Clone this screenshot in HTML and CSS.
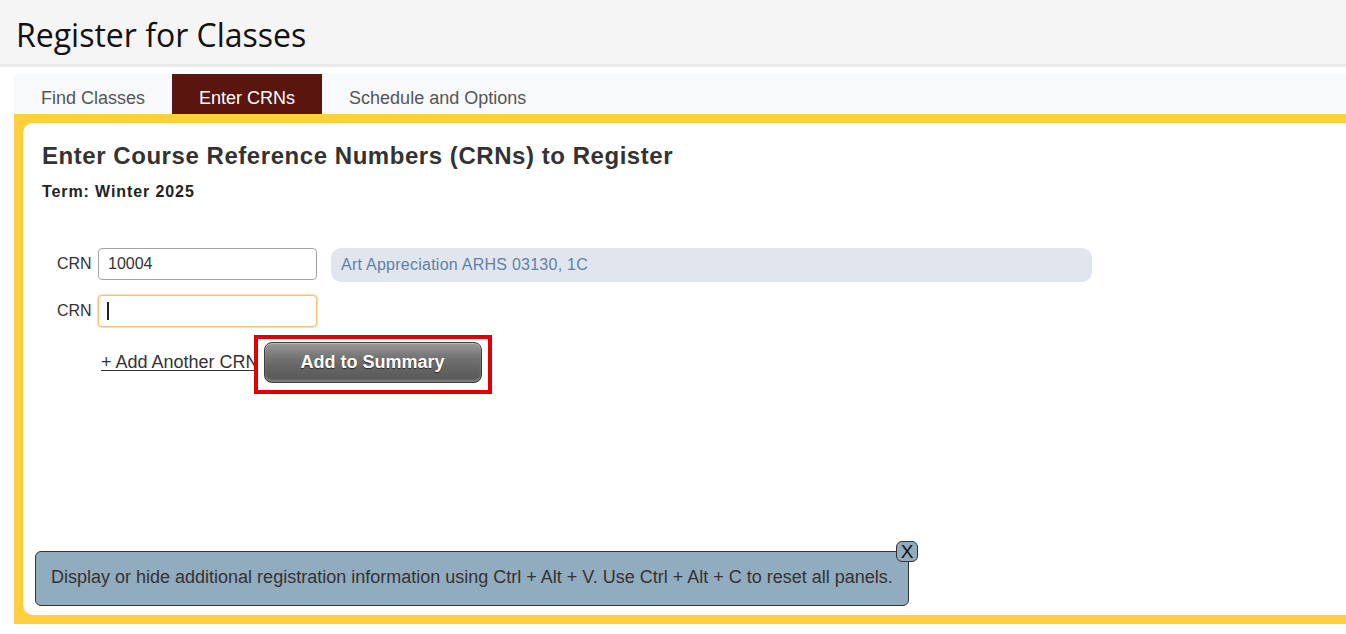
FILE: index.html
```html
<!DOCTYPE html>
<html lang="en">
<head>
<meta charset="utf-8">
<title>Register for Classes</title>
<link rel="stylesheet" href="styles.css">
</head>
<body>
<header class="page-header">
  <h1 class="page-title">Register for Classes</h1>
</header>
<main class="main">
  <nav class="tabs">
    <a class="tab" href="#">Find Classes</a>
    <a class="tab tab-active" href="#">Enter CRNs</a>
    <a class="tab" href="#">Schedule and Options</a>
  </nav>
  <section class="panel">
    <div class="panel-inner">
      <h2 class="panel-title">Enter Course Reference Numbers (CRNs) to Register</h2>
      <div class="term">Term: Winter 2025</div>
      <div class="crn-list">
        <div class="crn-row">
          <label class="crn-label">CRN</label>
          <input class="crn-input" type="text" value="10004">
          <div class="crn-desc">Art Appreciation ARHS 03130, 1C</div>
        </div>
        <div class="crn-row">
          <label class="crn-label">CRN</label>
          <div class="crn-input is-focused"><span class="caret"></span></div>
        </div>
      </div>
      <div class="actions">
        <a class="add-link" href="#">+ Add Another CRN</a>
        <div class="highlight">
          <button class="btn-summary" type="button">Add to Summary</button>
        </div>
      </div>
      <div class="notice">
        <p class="notice-text">Display or hide additional registration information using Ctrl + Alt + V. Use Ctrl + Alt + C to reset all panels.</p>
        <button class="notice-close" type="button">X</button>
      </div>
    </div>
  </section>
</main>
</body>
</html>
```

FILE: styles.css
```css
* { box-sizing: border-box; }

html, body {
  margin: 0;
  padding: 0;
  background: #ffffff;
  height: 634px;
  overflow: hidden;
}

body {
  font-family: "Liberation Sans", Arial, sans-serif;
  color: #333333;
}

.page-header {
  height: 67px;
  background: #f5f5f5;
  border-bottom: 3px solid #ebebeb;
  padding-left: 16px;
  display: flex;
  align-items: center;
}

.page-title {
  margin: 0;
  margin-top: 4px;
  font-family: "Open Sans", "Noto Sans", sans-serif;
  font-weight: 400;
  font-size: 32px;
  color: #111111;
}

.main {
  margin-top: 7px;
  margin-left: 14px;
}

.tabs {
  display: flex;
  height: 40px;
  background: #f8f9fa;
}

.tab {
  display: block;
  height: 40px;
  overflow: hidden;
  padding: 0 27px;
  line-height: 48px;
  font-size: 18px;
  color: #555555;
  text-decoration: none;
}

.tab-active {
  background: #5a150f;
  color: #ffffff;
}

.panel {
  background: #ffcf40;
  padding: 9px 0 9px 9px;
}

.panel-inner {
  background: #ffffff;
  border-radius: 10px 0 0 10px;
  height: 492px;
  padding: 19px 0 9px 12px;
  display: flex;
  flex-direction: column;
}

.panel-title {
  margin: 0 0 0 7px;
  font-size: 24px;
  line-height: 28px;
  font-weight: 700;
  letter-spacing: 0.55px;
  color: #333333;
}

.term {
  margin: 12px 0 0 7px;
  font-size: 16px;
  line-height: 20px;
  font-weight: 700;
  letter-spacing: 0.9px;
  color: #222222;
}

.crn-list {
  margin-top: 46px;
  padding-left: 22px;
  display: flex;
  flex-direction: column;
  gap: 13px;
}

.crn-row {
  display: flex;
  align-items: flex-start;
}

.crn-label {
  font-size: 16px;
  line-height: 32px;
  color: #333333;
  width: 41px;
}

.crn-input {
  width: 219px;
  height: 32px;
  border: 1px solid #a3a3a3;
  border-radius: 4px;
  padding: 0 9px;
  font-family: "Liberation Sans", Arial, sans-serif;
  font-size: 16px;
  color: #333333;
  background: #ffffff;
  outline: none;
}

.crn-input.is-focused {
  border: 1px solid #f6c27c;
  box-shadow: 0 0 0 1px #fddbac;
  display: flex;
  align-items: center;
  padding-left: 8px;
}

.caret {
  display: block;
  width: 2px;
  height: 18px;
  background: #222222;
}

.crn-desc {
  margin-left: 14px;
  width: 761px;
  height: 34px;
  border-radius: 10px;
  background: #e1e6ee;
  padding-left: 10px;
  line-height: 34px;
  font-size: 16px;
  letter-spacing: 0.25px;
  color: #5f82a8;
}

.actions {
  margin-top: 8px;
  padding-left: 66px;
  display: flex;
  align-items: center;
}

.add-link {
  font-size: 18px;
  color: #333333;
  text-decoration: underline;
  text-underline-offset: 2px;
  margin-bottom: 4px;
}

.highlight {
  margin-left: -5px;
  background: #ffffff;
  border: 4px solid #e00000;
  padding: 3px 6px 7px 6px;
  display: flex;
  position: relative;
}

.btn-summary {
  width: 218px;
  height: 41px;
  border: 1px solid #3d3d3d;
  border-radius: 8px;
  background: linear-gradient(#9a9a9a 0%, #767676 35%, #666666 60%, #575757 100%);
  box-shadow: inset 0 1px 0 rgba(255,255,255,0.35), inset 0 -2px 2px rgba(255,255,255,0.25);
  font-family: "Liberation Sans", Arial, sans-serif;
  font-size: 18px;
  font-weight: 700;
  color: #ffffff;
  text-shadow: 0 1px 1px rgba(0,0,0,0.6);
  padding: 0;
}

.notice {
  position: relative;
  margin-top: auto;
  width: 874px;
  height: 55px;
  background: #91abbf;
  border: 1px solid #333333;
  border-radius: 6px;
  display: flex;
  align-items: center;
  padding-left: 15px;
  padding-bottom: 2px;
}

.notice-text {
  margin: 0;
  font-size: 18px;
  color: #333333;
}

.notice-close {
  position: absolute;
  top: -11px;
  right: -10px;
  width: 22px;
  height: 21px;
  padding: 0;
  background: #91abbf;
  border: 1px solid #333333;
  border-radius: 6px;
  font-family: "Liberation Sans", Arial, sans-serif;
  font-size: 19px;
  line-height: 19px;
  color: #111111;
}
```
